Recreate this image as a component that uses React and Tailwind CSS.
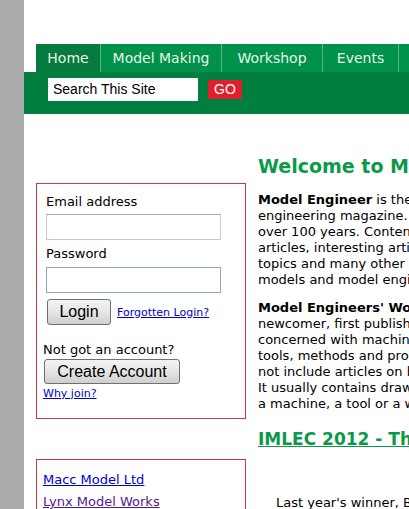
import React from "react";

const V = { fontFamily: '"DejaVu Sans", Verdana, sans-serif' };
const A = { fontFamily: '"Liberation Sans", Arial, sans-serif' };

function Tab({ label, w, active }) {
  return (
    <div
      className={`h-full shrink-0 flex items-center justify-center text-[14px] text-[#e6f3e6] border-r border-[#5cb583] ${active ? "bg-[#077b3d]" : "bg-[#00924a]"}`}
      style={{ ...V, width: w }}
    >
      {label}
    </div>
  );
}

export default function App() {
  return (
    <div className="flex w-[409px] h-[509px] overflow-hidden bg-white">
      <div className="w-[24px] shrink-0 bg-[#ababab]" />
      <div className="w-[1000px] shrink-0">
        <div className="h-[44px]" />
        <div className="h-[28px] flex pl-[12px]">
          <Tab label="Home" w={65} active />
          <Tab label="Model Making" w={121} />
          <Tab label="Workshop" w={101} />
          <Tab label="Events" w={76} />
          <Tab label="Forum" w={80} />
          <Tab label="Shop" w={70} />
        </div>
        <div className="h-[42px] bg-[#007f3f] flex items-start pl-[24px] pt-[6px] gap-[10px]">
          <div
            className="w-[150px] h-[23px] bg-white flex items-center pl-[5px] text-[14px] text-black"
            style={A}
          >
            Search This Site
          </div>
          <div
            className="mt-[2px] w-[34px] h-[19px] bg-[#e11f2c] text-white text-[14px] flex items-center justify-center"
            style={A}
          >
            GO
          </div>
        </div>
        <div className="flex">
          <div className="ml-[12px] w-[210px] shrink-0">
            <div className="mt-[69px] h-[236px] border border-[#c43a47] px-[6px] pt-[10px]" style={V}>
              <div className="pl-[3px]">
                <div className="text-[13px] leading-[16px] text-black">Email address</div>
                <div className="mt-[4px] w-[175px] h-[26px] border border-[#c9c9c9] border-t-[#a9a9a9] bg-white" />
                <div className="mt-[6px] text-[13px] leading-[16px] text-black">Password</div>
                <div className="mt-[5px] w-[175px] h-[26px] border border-[#8fa9c4] bg-white" />
                <div className="mt-[6px] flex items-center gap-[6px]">
                  <div
                    className="ml-[1px] w-[64px] h-[26px] rounded-[3px] border border-[#707070] bg-gradient-to-b from-[#f3f3f3] via-[#e6e6e6] to-[#cfcfcf] flex items-center justify-center text-[16px] text-black"
                    style={A}
                  >
                    Login
                  </div>
                  <span className="text-[11px] text-[#0000cc] underline mt-[2px]">Forgotten Login?</span>
                </div>
              </div>
              <div className="mt-[17px] text-[13px] leading-[16px] text-black">Not got an account?</div>
              <div
                className="mt-[1px] ml-[1px] w-[136px] h-[25px] rounded-[3px] border border-[#707070] bg-gradient-to-b from-[#f3f3f3] via-[#e6e6e6] to-[#cfcfcf] flex items-center justify-center text-[16px] text-black"
                style={A}
              >
                Create Account
              </div>
              <div className="mt-[3px] text-[11px] leading-[14px] text-[#0000cc] underline">Why join?</div>
            </div>
            <div className="mt-[40px] h-[80px] border border-[#c43a47] px-[6px] pt-[9px]" style={V}>
              <div className="text-[13px] leading-[22px] text-[#0000cc] underline">Macc Model Ltd</div>
              <div className="text-[13px] leading-[22px] text-[#551a8b] underline">Lynx Model Works</div>
            </div>
          </div>
          <div className="ml-[12px] w-[600px] shrink-0 whitespace-nowrap" style={V}>
            <h1 className="mt-[40px] text-[19px] leading-[24px] font-bold text-[#0a9a47]">
              Welcome to Model Engineer
            </h1>
            <p className="mt-[14px] text-[13px] leading-[16px] text-black">
              <b>Model Engineer</b> is the UK's oldest model<br />
              engineering magazine. It has been published for<br />
              over 100 years. Content includes constructional<br />
              articles, interesting articles on a wide range of<br />
              topics and many other items of interest to all<br />
              models and model engineering enthusiasts.
            </p>
            <p className="mt-[12px] text-[13px] leading-[16px] text-black">
              <b>Model Engineers' Workshop</b> is a relative<br />
              newcomer, first published in 1990. It is primarily<br />
              concerned with machining and workshop practice,<br />
              tools, methods and processes. As such it does<br />
              not include articles on building complete models.<br />
              It usually contains drawings and details for making<br />
              a machine, a tool or a workshop accessory.
            </p>
            <h2 className="mt-[17px] text-[17px] leading-[20px] font-bold text-[#0a9a47] underline">
              IMLEC 2012 - The International Model Locomotive Efficiency Challenge
            </h2>
            <p className="mt-[46px] ml-[18px] text-[13px] leading-[16px] text-black">
              Last year's winner, Bob Dowson
            </p>
          </div>
        </div>
      </div>
    </div>
  );
}
